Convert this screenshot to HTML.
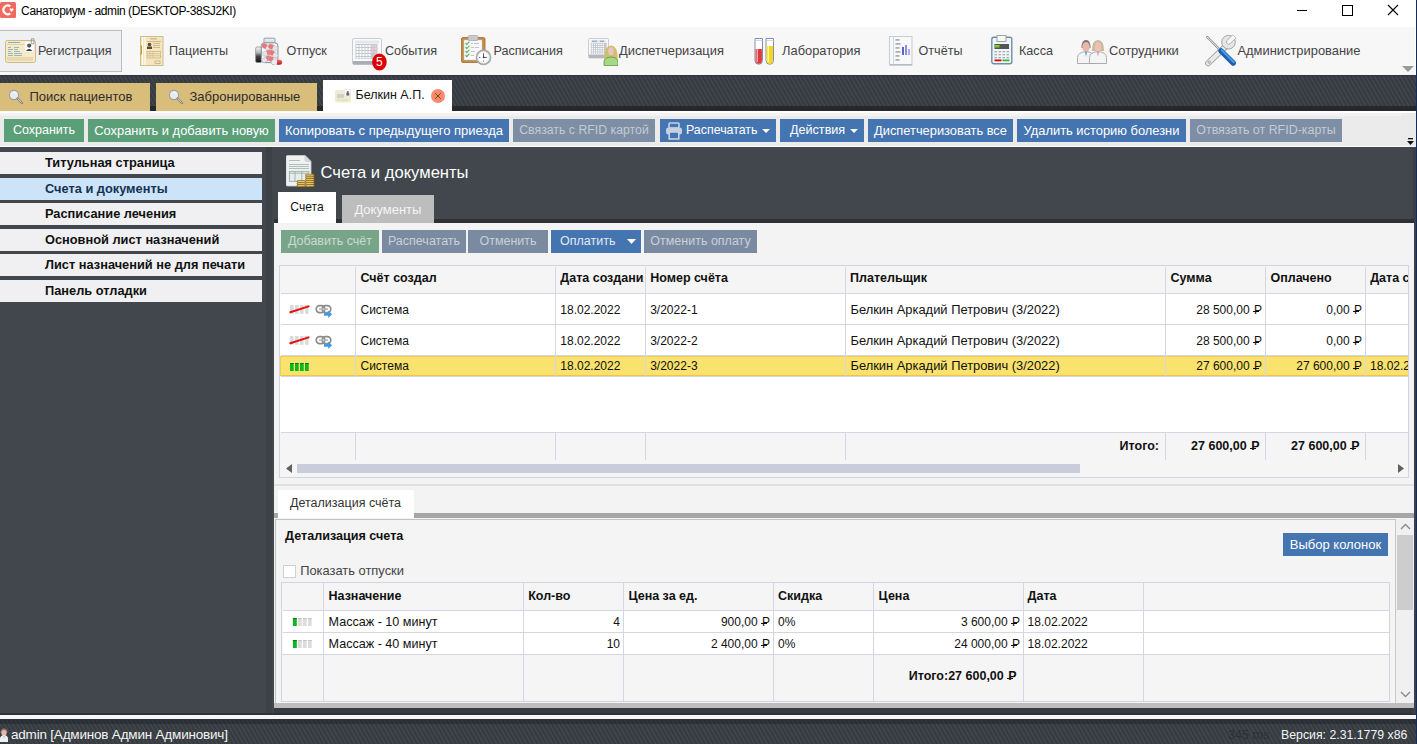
<!DOCTYPE html>
<html><head><meta charset="utf-8">
<style>
*{box-sizing:border-box;margin:0;padding:0}
html,body{width:1417px;height:744px;overflow:hidden;background:#fff;font-family:"Liberation Sans",sans-serif;position:relative}
.a{position:absolute}
.t{position:absolute;white-space:nowrap;line-height:1}
.r{position:relative;display:inline-block;margin-left:1px}
.r::after{content:"";position:absolute;left:-0.1em;width:0.5em;top:0.6em;height:0.08em;background:currentColor}
.stripes{background-color:#3a4045;background-image:repeating-linear-gradient(60deg,#353b3f 0px,#363c40 1.3px,#43494f 2.5px,#3c4247 3.1px,#353b3f 3.72px)}
.btn{position:absolute;height:23px;top:119px;color:#fff;font-size:12.5px;line-height:23px;text-align:center;white-space:nowrap}
.g{background:#5b9f78}
.b{background:#4575b0}
.d{background:#7d8ea5;color:#c3cbd5}
.nav{position:absolute;left:0;width:262px;height:22px;background:#f0f0f2;font-weight:bold;font-size:12.8px;line-height:22px;padding-left:45px;color:#111}
.gl{position:absolute;background:#d5d5e3}
.cell{position:absolute;font-size:12px;line-height:1;white-space:nowrap;color:#111}
.hd{font-weight:bold;font-size:12.5px}
</style></head><body>

<!-- Title bar -->
<div class="a" style="left:0;top:0;width:1417px;height:27px;background:#fff"></div>
<div class="a" style="left:0;top:2px;width:16px;height:16px;background:#f06a60;border-radius:1.5px"></div>
<svg class="a" style="left:0;top:0" width="17" height="20"><path d="M10.3 6.3 A4.3 4.3 0 1 0 10.3 13.3" stroke="#fff" stroke-width="2.2" fill="none"/><path d="M11.6 11.9 L9.7 9.8 A1 1 0 0 1 11.6 8.9 A1 1 0 0 1 13.4 9.8z" fill="#fff"/></svg>
<div class="t" style="left:21px;top:4.9px;font-size:12px;letter-spacing:-0.4px;color:#000">Санаториум - admin (DESKTOP-38SJ2KI)</div>
<div class="a" style="left:1297px;top:10px;width:10px;height:1px;background:#000"></div>
<div class="a" style="left:1342px;top:5px;width:11px;height:11px;border:1px solid #000"></div>
<svg class="a" style="left:1387px;top:4px" width="12" height="12"><path d="M1 1 L11 11 M11 1 L1 11" stroke="#000" stroke-width="1.1"/></svg>

<!-- Ribbon -->
<div class="a" style="left:0;top:27px;width:1415px;height:48px;background:#f7f7f7"></div>
<div class="a" style="left:0;top:30px;width:122px;height:42px;background:#eff0f2;border:1px solid #bcbcbc;border-left:none"></div>
<!-- ribbon icons -->
<svg class="a" style="left:5px;top:38px" width="32" height="26" viewBox="0 0 32 26">
<rect x="0.5" y="2.5" width="30" height="22" rx="2" fill="#f7eac6" stroke="#cdb98c"/>
<rect x="3" y="4.2" width="12" height="0.8" fill="#6aa2b8"/>
<rect x="2" y="6.2" width="20" height="0.8" fill="#dccb9f"/>
<g fill="#6aa2b8" opacity="0.85"><rect x="3" y="9" width="3" height="0.8"/><rect x="9" y="9" width="5" height="0.8"/>
<rect x="3" y="11" width="5" height="0.8"/><rect x="9" y="11" width="4" height="0.8"/>
<rect x="3" y="13" width="3" height="0.8"/><rect x="9" y="13" width="6" height="0.8"/>
<rect x="3" y="15" width="5" height="0.8"/><rect x="9" y="15" width="8" height="0.8"/>
<rect x="3" y="17" width="5" height="0.8"/><rect x="9" y="17" width="8" height="0.8"/></g>
<rect x="2" y="19.5" width="26" height="0.8" fill="#d2be8e"/><rect x="2" y="21.5" width="26" height="0.8" fill="#d2be8e"/>
<rect x="19.5" y="3.5" width="9.5" height="10.5" fill="#fff" stroke="#e3e3e3" stroke-width="0.6"/>
<circle cx="24.2" cy="7.6" r="2.1" fill="#5a5a5a"/><path d="M20.8 13 q3.4-4.2 6.8 0z" fill="#3f3f3f"/>
<path d="M26.3 0.8 h2.6 v5 h-2.6z" fill="none" stroke="#8a8a8a" stroke-width="0.8"/>
</svg>
<svg class="a" style="left:140px;top:36px" width="24" height="31" viewBox="0 0 24 31">
<rect x="0.5" y="0.5" width="22.5" height="29" fill="#f5e6bd" stroke="#cdbb92"/>
<rect x="2" y="1" width="1" height="28" fill="#fff"/><rect x="4.5" y="1" width="1" height="28" fill="#fff"/>
<path d="M0 10 h1.5 v8 h-1.5" fill="none" stroke="#c39a2a" stroke-width="1"/>
<rect x="10" y="2.5" width="7" height="0.8" fill="#8a7a5a" opacity="0.7"/>
<rect x="7" y="5" width="14" height="1" fill="#cdb98c"/>
<circle cx="9.5" cy="8.5" r="1.8" fill="#5a4a36"/><rect x="7" y="10.5" width="5" height="2.5" fill="#5a4a36"/>
<rect x="13" y="7" width="7" height="1" fill="#cdb98c"/><rect x="13" y="9" width="7" height="1" fill="#cdb98c"/><rect x="13" y="11" width="7" height="1" fill="#cdb98c"/>
<rect x="7" y="15.5" width="13.5" height="6.5" fill="none" stroke="#cdb98c" stroke-width="0.8"/><path d="M7 17.7 h13.5 M7 19.8 h13.5 M10 15.5 v6.5 M13 15.5 v6.5" stroke="#cdb98c" stroke-width="0.7"/>
<rect x="15" y="25" width="5" height="2.5" fill="none" stroke="#cdb98c"/>
</svg>
<svg class="a" style="left:255px;top:37px" width="28" height="29" viewBox="0 0 28 29">
<defs><linearGradient id="capg" x1="0" y1="0" x2="0" y2="1"><stop offset="0" stop-color="#f4f4f4"/><stop offset="0.35" stop-color="#b8b8b8"/><stop offset="0.6" stop-color="#444"/><stop offset="1" stop-color="#111"/></linearGradient>
<linearGradient id="pillr" x1="0" y1="0" x2="0" y2="1"><stop offset="0" stop-color="#f26a6a"/><stop offset="1" stop-color="#c41010"/></linearGradient></defs>
<rect x="0.6" y="10" width="6" height="15.5" rx="1.5" fill="url(#capg)" stroke="#8c8c8c" stroke-width="0.7"/>
<rect x="9" y="1.2" width="11" height="4.8" rx="0.8" fill="#eef0f2" stroke="#8a93a3" stroke-width="0.9"/>
<path d="M10 3.2 h9 M10 4.6 h9" stroke="#c9ced6" stroke-width="0.5"/>
<rect x="6.3" y="5.8" width="16.6" height="19.8" rx="3" fill="#f4f6f8" stroke="#838c9c" stroke-width="1"/>
<g transform="translate(11.5 10) rotate(28)"><rect x="-5" y="-2.3" width="10" height="4.6" rx="2.3" fill="#e3e7ea" stroke="#b5bcc2" stroke-width="0.5"/><path d="M0 -2.3 h-2.7 a2.3 2.3 0 0 0 0 4.6 h2.7z" fill="#e87878"/></g>
<g transform="translate(18 10.5) rotate(25)"><rect x="-5" y="-2.3" width="10" height="4.6" rx="2.3" fill="#e3e7ea" stroke="#b5bcc2" stroke-width="0.5"/><path d="M0 -2.3 h-2.7 a2.3 2.3 0 0 0 0 4.6 h2.7z" fill="#e87878"/></g>
<g transform="translate(12 16) rotate(-20)"><rect x="-5" y="-2.3" width="10" height="4.6" rx="2.3" fill="#e3e7ea" stroke="#b5bcc2" stroke-width="0.5"/><path d="M0 -2.3 h2.7 a2.3 2.3 0 0 1 0 4.6 h-2.7z" fill="#e87878"/></g>
<g transform="translate(18.5 17) rotate(35)"><rect x="-5" y="-2.3" width="10" height="4.6" rx="2.3" fill="#e3e7ea" stroke="#b5bcc2" stroke-width="0.5"/><path d="M0 -2.3 h-2.7 a2.3 2.3 0 0 0 0 4.6 h2.7z" fill="#e87878"/></g>
<g transform="translate(11.5 22) rotate(-25)"><rect x="-5" y="-2.3" width="10" height="4.6" rx="2.3" fill="#e3e7ea" stroke="#b5bcc2" stroke-width="0.5"/><path d="M0 -2.3 h2.7 a2.3 2.3 0 0 1 0 4.6 h-2.7z" fill="#e87878"/></g>
<g transform="translate(18 22.5) rotate(15)"><rect x="-5" y="-2.3" width="10" height="4.6" rx="2.3" fill="#e3e7ea" stroke="#b5bcc2" stroke-width="0.5"/><path d="M0 -2.3 h-2.7 a2.3 2.3 0 0 0 0 4.6 h2.7z" fill="#e87878"/></g>
<rect x="16.3" y="22.8" width="10.8" height="5" rx="2.5" fill="url(#pillr)"/><rect x="16.3" y="22.8" width="5.6" height="5" rx="2.5" fill="#e9eef1" stroke="#b9c2c8" stroke-width="0.4"/><rect x="19.4" y="22.8" width="2.5" height="5" fill="#e9eef1"/>
</svg>
<svg class="a" style="left:352px;top:38px" width="38" height="33" viewBox="0 0 38 33">
<rect x="0.5" y="0.5" width="29" height="26" rx="1.5" fill="#fafbfc" stroke="#c9cdd1"/>
<rect x="1" y="23" width="28.5" height="3.5" fill="#a8afb6"/>
<rect x="3" y="2.5" width="24" height="3" fill="#e4e8ec"/>
<rect x="3.5" y="6" width="22" height="15" fill="#c3c8ce"/>
<g fill="#fff">
<rect x="4.5" y="7" width="2" height="2"/><rect x="7.5" y="7" width="2" height="2"/><rect x="10.5" y="7" width="2" height="2"/><rect x="13.5" y="7" width="2" height="2"/><rect x="16.5" y="7" width="2" height="2"/>
<rect x="4.5" y="10" width="2" height="2"/><rect x="7.5" y="10" width="2" height="2"/><rect x="10.5" y="10" width="2" height="2"/><rect x="13.5" y="10" width="2" height="2"/><rect x="16.5" y="10" width="2" height="2"/>
<rect x="4.5" y="13" width="2" height="2"/><rect x="7.5" y="13" width="2" height="2"/><rect x="10.5" y="13" width="2" height="2"/><rect x="13.5" y="13" width="2" height="2"/><rect x="16.5" y="13" width="2" height="2"/>
<rect x="4.5" y="16" width="2" height="2"/><rect x="7.5" y="16" width="2" height="2"/><rect x="10.5" y="16" width="2" height="2"/><rect x="13.5" y="16" width="2" height="2"/><rect x="16.5" y="16" width="2" height="2"/>
<rect x="4.5" y="19" width="2" height="1.5"/><rect x="7.5" y="19" width="2" height="1.5"/><rect x="10.5" y="19" width="2" height="1.5"/><rect x="13.5" y="19" width="2" height="1.5"/><rect x="16.5" y="19" width="2" height="1.5"/>
</g>
<g fill="#f7c9cf"><rect x="19.5" y="7" width="2" height="2"/><rect x="22.5" y="7" width="2" height="2"/><rect x="19.5" y="10" width="2" height="2"/><rect x="22.5" y="10" width="2" height="2"/><rect x="19.5" y="13" width="2" height="2"/><rect x="22.5" y="13" width="2" height="2"/></g>
<ellipse cx="27.4" cy="24" rx="7.3" ry="8.6" fill="#dd0000"/>
<text x="27.4" y="28.3" font-family="Liberation Sans" font-size="12" fill="#fff" text-anchor="middle">5</text>
</svg>
<svg class="a" style="left:461px;top:35px" width="32" height="32" viewBox="0 0 32 32">
<rect x="0.5" y="2.5" width="23.5" height="25" rx="1.5" fill="#c68a45" stroke="#a56d2f" stroke-width="0.8"/>
<rect x="3" y="5" width="18" height="20" fill="#fff" stroke="#bcc6cf" stroke-width="0.6"/>
<rect x="7" y="0.5" width="10" height="5" rx="1.5" fill="#c8cacc" stroke="#9a9c9e" stroke-width="0.6"/>
<path d="M4.5 8 l1.3 1.6 l2.6-3 M4.5 12 l1.3 1.6 l2.6-3 M4.5 16 l1.3 1.6 l2.6-3 M4.5 20 l1.3 1.6 l2.6-3" stroke="#2f9a1e" stroke-width="1.2" fill="none"/>
<g fill="#9a9a9a"><rect x="10" y="8" width="2" height="0.8"/><rect x="13" y="8" width="5" height="0.8"/><rect x="10" y="12" width="3" height="0.8"/><rect x="14" y="12" width="4" height="0.8"/><rect x="10" y="16" width="4" height="0.8"/><rect x="10" y="20" width="3" height="0.8"/></g><rect x="4" y="6.5" width="16" height="15" fill="#e6ebef" opacity="0.35"/>
<circle cx="22.5" cy="22.4" r="7" fill="#fff" stroke="#a8abae" stroke-width="1.8"/><circle cx="22.5" cy="22.4" r="5.6" fill="none" stroke="#d8dadc" stroke-width="0.6"/>
<path d="M22.5 18.2 v4.2 h3.6" stroke="#333" stroke-width="0.8" fill="none"/><circle cx="22.5" cy="22.4" r="0.8" fill="#333"/><circle cx="18.8" cy="22.4" r="0.55" fill="#333"/><circle cx="22.5" cy="26" r="0.55" fill="#333"/>
</svg>
<svg class="a" style="left:588px;top:38px" width="30" height="28" viewBox="0 0 30 28">
<rect x="0.5" y="0.5" width="20" height="19.5" rx="1.2" fill="#f8f9fa" stroke="#c9cdd1"/>
<rect x="1" y="16.5" width="19.5" height="3.5" fill="#b3b9bf"/>
<rect x="3" y="2" width="15" height="2.2" fill="#e3e7eb"/><rect x="4" y="2.8" width="5" height="0.7" fill="#6a7a88"/><rect x="12" y="2.8" width="4" height="0.7" fill="#6a7a88"/>
<rect x="2.8" y="4.8" width="15.8" height="11.2" fill="#bfc5cc"/>
<rect x="3.6" y="5.6" width="1.4" height="1.4" fill="#fff"/><rect x="5.8" y="5.6" width="1.4" height="1.4" fill="#fff"/><rect x="8.0" y="5.6" width="1.4" height="1.4" fill="#fff"/><rect x="10.2" y="5.6" width="1.4" height="1.4" fill="#fff"/><rect x="12.4" y="5.6" width="1.4" height="1.4" fill="#fff"/><rect x="14.6" y="5.6" width="1.4" height="1.4" fill="#fff"/><rect x="16.8" y="5.6" width="1.4" height="1.4" fill="#f3b8c0"/><rect x="3.6" y="7.8" width="1.4" height="1.4" fill="#fff"/><rect x="5.8" y="7.8" width="1.4" height="1.4" fill="#fff"/><rect x="8.0" y="7.8" width="1.4" height="1.4" fill="#fff"/><rect x="10.2" y="7.8" width="1.4" height="1.4" fill="#fff"/><rect x="12.4" y="7.8" width="1.4" height="1.4" fill="#fff"/><rect x="14.6" y="7.8" width="1.4" height="1.4" fill="#fff"/><rect x="16.8" y="7.8" width="1.4" height="1.4" fill="#f3b8c0"/><rect x="3.6" y="10.0" width="1.4" height="1.4" fill="#fff"/><rect x="5.8" y="10.0" width="1.4" height="1.4" fill="#fff"/><rect x="8.0" y="10.0" width="1.4" height="1.4" fill="#fff"/><rect x="10.2" y="10.0" width="1.4" height="1.4" fill="#fff"/><rect x="12.4" y="10.0" width="1.4" height="1.4" fill="#fff"/><rect x="14.6" y="10.0" width="1.4" height="1.4" fill="#fff"/><rect x="16.8" y="10.0" width="1.4" height="1.4" fill="#f3b8c0"/><rect x="3.6" y="12.2" width="1.4" height="1.4" fill="#fff"/><rect x="5.8" y="12.2" width="1.4" height="1.4" fill="#fff"/><rect x="8.0" y="12.2" width="1.4" height="1.4" fill="#fff"/><rect x="10.2" y="12.2" width="1.4" height="1.4" fill="#fff"/><rect x="12.4" y="12.2" width="1.4" height="1.4" fill="#fff"/><rect x="14.6" y="12.2" width="1.4" height="1.4" fill="#fff"/><rect x="16.8" y="12.2" width="1.4" height="1.4" fill="#f3b8c0"/><rect x="3.6" y="14.4" width="1.4" height="1.4" fill="#fff"/><rect x="5.8" y="14.4" width="1.4" height="1.4" fill="#fff"/><rect x="8.0" y="14.4" width="1.4" height="1.4" fill="#fff"/><rect x="10.2" y="14.4" width="1.4" height="1.4" fill="#fff"/><rect x="12.4" y="14.4" width="1.4" height="1.4" fill="#fff"/><rect x="14.6" y="14.4" width="1.4" height="1.4" fill="#fff"/><rect x="16.8" y="14.4" width="1.4" height="1.4" fill="#f3b8c0"/>
<path d="M16.5 23 q-1-15 6.5-15.5 q7.5 0.5 6.5 15.5z" fill="#cdbf70"/>
<ellipse cx="23" cy="13.2" rx="2.8" ry="4" fill="#ebc5bd"/>
<path d="M16 27.5 v-3.5 q0-4.5 7-5 q7 0.5 7 5 v3.5z" fill="#a6d985" stroke="#5f9a3e" stroke-width="0.8"/>
</svg>
<svg class="a" style="left:754px;top:38px" width="21" height="27" viewBox="0 0 21 27">
<path d="M1 0.5 h7.5 v22 a3.75 3.75 0 0 1 -7.5 0z" fill="#fff" stroke="#858aa8" stroke-width="1"/>
<path d="M1.6 11 h6.3 v11.5 a3.15 3.15 0 0 1 -6.3 0z" fill="#df3a3a"/><rect x="2.5" y="11" width="1.5" height="13" fill="#f4a5a5"/>
<path d="M12 0.5 h7.5 v22 a3.75 3.75 0 0 1 -7.5 0z" fill="#fff" stroke="#858aa8" stroke-width="1"/>
<path d="M12.6 8 h6.3 v14.5 a3.15 3.15 0 0 1 -6.3 0z" fill="#f7d51e"/><rect x="13.5" y="8" width="1.5" height="16" fill="#fdfb8c"/>
<rect x="1" y="2.2" width="7.5" height="0.8" fill="#ccd"/><rect x="12" y="2.2" width="7.5" height="0.8" fill="#ccd"/>
</svg>
<svg class="a" style="left:889px;top:36px" width="24" height="30" viewBox="0 0 24 30">
<rect x="0.5" y="0.5" width="22.5" height="28.5" fill="#f6f8fa" stroke="#c8cbd0"/>
<rect x="1" y="28" width="22" height="1.5" fill="#b8bcc2"/>
<rect x="4" y="1" width="0.8" height="27.5" fill="#c5cdd5"/>
<g fill="#666"><rect x="6.5" y="3.5" width="4" height="0.9"/><rect x="6.5" y="7.5" width="5" height="0.9"/><rect x="6.5" y="11.5" width="4" height="0.9"/><rect x="6.5" y="15.5" width="5" height="0.9"/><rect x="6.5" y="19.5" width="4" height="0.9"/><rect x="6.5" y="23.5" width="4" height="0.9"/></g>
<rect x="13" y="11" width="2" height="8" fill="#5b64c0"/><rect x="16" y="9" width="2" height="10" fill="#8990e0"/><rect x="19" y="13" width="2" height="6" fill="#a9b0ea"/>
</svg>
<svg class="a" style="left:991px;top:35px" width="22" height="30" viewBox="0 0 22 30">
<rect x="0.8" y="2.3" width="20" height="26.5" rx="2" fill="#eef6fb" stroke="#6f8ea6" stroke-width="1.4"/>
<rect x="6" y="0.5" width="9" height="6" fill="#f4faf0" stroke="#999" stroke-width="0.9"/>
<rect x="3.5" y="9" width="14.5" height="5" fill="#555"/><rect x="4" y="10" width="4.5" height="2.5" fill="#7ad21c"/>
<g fill="#a9a9a9"><rect x="3.5" y="16" width="2.5" height="1.3"/><rect x="7.5" y="16" width="2.5" height="1.3"/><rect x="11.5" y="16" width="2.5" height="1.3"/><rect x="15.5" y="16" width="2.5" height="1.3"/><rect x="3.5" y="19" width="2.5" height="1.3"/><rect x="7.5" y="19" width="2.5" height="1.3"/><rect x="11.5" y="19" width="2.5" height="1.3"/><rect x="15.5" y="19" width="2.5" height="1.3"/><rect x="3.5" y="22" width="2.5" height="1.3"/><rect x="7.5" y="22" width="2.5" height="1.3"/><rect x="11.5" y="22" width="2.5" height="1.3"/><rect x="15.5" y="22" width="2.5" height="1.3"/></g>
<rect x="3.5" y="24.5" width="7" height="1.8" fill="#d00"/><rect x="11.5" y="24.5" width="7" height="1.8" fill="#4caf2a"/>
</svg>
<svg class="a" style="left:1077px;top:39px" width="30" height="26" viewBox="0 0 30 26">
<path d="M4.5 9 q0-8 4.5-8 q4.5 0 4.5 8z" fill="#7c6f76"/>
<ellipse cx="9" cy="8" rx="3.8" ry="5" fill="#e8b8a8"/>
<path d="M15 12 q0-11 6-11 q6 0 6 11z" fill="#c7b99c"/>
<ellipse cx="21" cy="8" rx="3.5" ry="5" fill="#eebfb6"/>
<path d="M0.5 24.5 v-6 q0-5 8.5-6 q8.5 1 8.5 6 v6z" fill="#f4f4f4" stroke="#9a9a9a" stroke-width="0.8"/>
<path d="M8 13 l1 5 l1-5z" fill="#5b9cd0"/>
<path d="M12.5 24.5 v-6 q0-5 8.5-6 q8.5 1 8.5 6 v6z" fill="#f4f4f4" stroke="#9a9a9a" stroke-width="0.8"/>
<path d="M20 13 l1 5 l1-5z" fill="#e08fa0"/>
</svg>
<svg class="a" style="left:1204px;top:34px" width="33" height="33" viewBox="0 0 33 33">
<defs><linearGradient id="bh" x1="0" y1="0" x2="1" y2="0"><stop offset="0" stop-color="#6bb3f0"/><stop offset="0.5" stop-color="#2a7fd6"/><stop offset="1" stop-color="#1254a8"/></linearGradient></defs>
<path d="M3.2 3 L17 16.8" stroke="#8d8d8d" stroke-width="2.4" stroke-linecap="round"/>
<path d="M3.2 3 L17 16.8" stroke="#f4f4f4" stroke-width="1" stroke-linecap="round"/>
<path d="M21.5 12.5 L4.2 29.2" stroke="#9c9c9c" stroke-width="6" stroke-linecap="round"/>
<path d="M21.5 12.5 L4.2 29.2" stroke="#e9e9e9" stroke-width="4.4" stroke-linecap="round"/>
<circle cx="24.5" cy="8.2" r="6.8" fill="#e6e6e6" stroke="#9c9c9c" stroke-width="0.9"/>
<path d="M23.1 6.4 L28.8 0.7 L32 3.9 L26.3 9.6 A2.25 2.25 0 0 1 23.1 6.4z" fill="#f7f7f7" stroke="#a0a0a0" stroke-width="0.8"/>
<path d="M28.5 0 L33 4.5 L33 0z" fill="#f7f7f7"/>
<circle cx="5.2" cy="28.2" r="1.2" fill="none" stroke="#8a8a8a" stroke-width="0.7"/>
<path d="M17 16.8 L29.2 29" stroke="#1a5fb0" stroke-width="5.4" stroke-linecap="round"/>
<path d="M17.8 16.2 L29.8 28.2" stroke="#4a9be6" stroke-width="2" stroke-linecap="round"/>
</svg>
<!-- ribbon text -->
<div class="t" style="left:38px;top:44.5px;font-size:12.6px;color:#444">Регистрация</div>
<div class="t" style="left:169px;top:44.5px;font-size:12.6px;color:#444">Пациенты</div>
<div class="t" style="left:286.5px;top:44.5px;font-size:12.6px;color:#444">Отпуск</div>
<div class="t" style="left:385px;top:44.5px;font-size:12.6px;color:#444">События</div>
<div class="t" style="left:493.5px;top:44.5px;font-size:12.6px;color:#444">Расписания</div>
<div class="t" style="left:619px;top:44.5px;font-size:12.9px;color:#444">Диспетчеризация</div>
<div class="t" style="left:782px;top:44.5px;font-size:12.9px;color:#444">Лаборатория</div>
<div class="t" style="left:918.5px;top:44.5px;font-size:12.6px;color:#444">Отчёты</div>
<div class="t" style="left:1019px;top:44.5px;font-size:12.6px;color:#444">Касса</div>
<div class="t" style="left:1109px;top:44.5px;font-size:12.9px;color:#444">Сотрудники</div>
<div class="t" style="left:1237.5px;top:44.5px;font-size:12.9px;color:#444">Администрирование</div>
<svg class="a" style="left:1402px;top:66px" width="12" height="6"><path d="M0 0 h12 l-6 6z" fill="#9a9a9a"/></svg>


<!-- Dark tab band -->
<div class="a stripes" style="left:0;top:75px;width:1416px;height:36px"></div>
<div class="a" style="left:0;top:75px;width:1416px;height:1px;background:#30343a"></div>
<div class="a" style="left:0;top:106px;width:1416px;height:5px;background:#26292c"></div>
<div class="a" style="left:0;top:83px;width:150px;height:28px;background:#d8bd7b"></div>
<div class="a" style="left:156px;top:83px;width:161px;height:28px;background:#d8bd7b"></div>
<div class="a" style="left:323px;top:80px;width:129px;height:31px;background:#fff"></div>
<svg class="a" style="left:8px;top:89px" width="16" height="15" viewBox="0 0 16 15"><circle cx="6" cy="6" r="4.6" fill="#e6ecef" stroke="#9aa0a4" stroke-width="1.1"/><path d="M5 3.5 a3 3 0 0 1 3 1" stroke="#fff" stroke-width="1" fill="none"/><path d="M9.5 9.5 L14 14" stroke="#888" stroke-width="2.2" stroke-linecap="round"/><path d="M9.8 9.8 L13.6 13.6" stroke="#ddd" stroke-width="0.8"/></svg>
<div class="t" style="left:29.5px;top:89.6px;font-size:13px;color:#2e2e2e">Поиск пациентов</div>
<svg class="a" style="left:168px;top:89px" width="16" height="15" viewBox="0 0 16 15"><circle cx="6" cy="6" r="4.6" fill="#e6ecef" stroke="#9aa0a4" stroke-width="1.1"/><path d="M5 3.5 a3 3 0 0 1 3 1" stroke="#fff" stroke-width="1" fill="none"/><path d="M9.5 9.5 L14 14" stroke="#888" stroke-width="2.2" stroke-linecap="round"/><path d="M9.8 9.8 L13.6 13.6" stroke="#ddd" stroke-width="0.8"/></svg>
<div class="t" style="left:189.5px;top:89.6px;font-size:13px;color:#2e2e2e">Забронированные</div>
<svg class="a" style="left:335px;top:89px" width="16" height="14" viewBox="0 0 16 14"><rect x="0" y="1" width="16" height="12.5" rx="1.5" fill="#f3ead2"/><rect x="2" y="5" width="7" height="4" fill="#c8d4c8"/><rect x="2" y="10.5" width="11" height="1" fill="#e0d4b4"/><rect x="10" y="0.5" width="5.5" height="7" fill="#fff" stroke="#ddd" stroke-width="0.5"/><circle cx="12.8" cy="3" r="1.1" fill="#666"/><rect x="11.3" y="3.8" width="3" height="2.8" fill="#666"/></svg>
<div class="t" style="left:355.5px;top:89.2px;font-size:12.5px;color:#111">Белкин А.П.</div>
<svg class="a" style="left:431px;top:89px" width="14" height="14" viewBox="0 0 14 14"><circle cx="7" cy="7" r="7" fill="#f98a6e"/><path d="M4.2 4.2 L9.8 9.8 M9.8 4.2 L4.2 9.8" stroke="#7a4436" stroke-width="1"/></svg>


<!-- Toolbar -->
<div class="a" style="left:0;top:111px;width:1416px;height:36px;background:#ebebeb"></div>
<div class="a" style="left:0;top:111px;width:1416px;height:1.5px;background:#fff"></div>
<div class="a" style="left:0;top:112.5px;width:1401px;height:3.5px;background:#f3f3f3"></div>
<div class="a" style="left:0;top:145.5px;width:1416px;height:1.5px;background:#fbfbfb"></div>
<div class="a" style="left:1401px;top:115px;width:15px;height:30px;background:#eaeaea"></div>
<svg class="a" style="left:1407px;top:137px" width="7" height="9"><rect x="1" y="1" width="5" height="1.3" fill="#111"/><path d="M0 4 h7 l-3.5 4z" fill="#111"/></svg>
<div class="btn g" style="left:4px;width:80px">Сохранить</div>
<div class="btn g" style="left:88px;width:187px;font-size:12.9px">Сохранить и добавить новую</div>
<div class="btn b" style="left:279px;width:230px;font-size:13px">Копировать с предыдущего приезда</div>
<div class="btn d" style="left:513px;width:142px;font-size:12.3px">Связать с RFID картой</div>
<div class="btn b" style="left:660px;width:116px;text-align:left;padding-left:26px;font-size:12.4px">Распечатать</div>
<svg class="a" style="left:665px;top:122px" width="18" height="18" viewBox="0 0 18 18"><rect x="4" y="1" width="10" height="5" rx="1" fill="none" stroke="#c5d1e2" stroke-width="1.6"/><rect x="1" y="5.5" width="16" height="7" rx="2.5" fill="#c5d1e2"/><rect x="4.2" y="10" width="9.6" height="7" fill="#4575b0" stroke="#c5d1e2" stroke-width="1.6"/></svg>
<svg class="a" style="left:762px;top:129px" width="8" height="4"><path d="M0 0 h8 l-4 4z" fill="#fff"/></svg>
<div class="btn b" style="left:780px;width:84px;text-align:left;padding-left:10px;font-size:12.6px">Действия</div>
<svg class="a" style="left:850px;top:129px" width="8" height="4"><path d="M0 0 h8 l-4 4z" fill="#fff"/></svg>
<div class="btn b" style="left:868px;width:145px;font-size:12.85px">Диспетчеризовать все</div>
<div class="btn b" style="left:1017px;width:169px;font-size:12.9px">Удалить историю болезни</div>
<div class="btn d" style="left:1190px;width:152px;font-size:12.45px">Отвязать от RFID-карты</div>

<!-- Main dark -->
<div class="a" style="left:0;top:147px;width:1416px;height:568px;background:#41474d"></div>
<div class="a" style="left:274px;top:707px;width:1140px;height:6px;background:#373c41"></div>
<div class="a" style="left:0;top:713px;width:1416px;height:2px;background:#2f3337"></div>
<div class="a" style="left:266px;top:147px;width:6px;height:566px;background:#3c4146"></div>
<div class="nav" style="top:152px">Титульная страница</div>
<div class="nav" style="top:178px;background:#cde3f7;color:#143354">Счета и документы</div>
<div class="nav" style="top:203px">Расписание лечения</div>
<div class="nav" style="top:229px">Основной лист назначений</div>
<div class="nav" style="top:254px">Лист назначений не для печати</div>
<div class="nav" style="top:280px">Панель отладки</div>

<!-- content header -->
<div class="a" style="left:1413px;top:147px;width:3px;height:567px;background:#3a4046"></div>
<svg class="a" style="left:286px;top:155px" width="30" height="33" viewBox="0 0 30 33">
<path d="M1.5 0.5 h17.5 l6 6 v23 a1.5 1.5 0 0 1 -1.5 1.5 h-22 a1.5 1.5 0 0 1 -1.5 -1.5 v-27.5 a1.5 1.5 0 0 1 1.5 -1.5z" fill="#eef3f2" stroke="#c5cfcc" stroke-width="0.8"/>
<path d="M19 0.5 v4.5 a1.5 1.5 0 0 0 1.5 1.5 h4.5z" fill="#d5dedc" stroke="#b9c5c2" stroke-width="0.6"/>
<g fill="#a3aeab"><rect x="3" y="5" width="11" height="0.8"/><rect x="3" y="9" width="20" height="0.8"/><rect x="3" y="11" width="20" height="0.8"/><rect x="3" y="13" width="20" height="0.8"/></g>
<rect x="3.3" y="16.3" width="19.5" height="10" fill="#e6eeec" stroke="#98a4a1" stroke-width="0.8"/>
<path d="M3.3 18.2 h19.5 M9 16.3 v10 M15.8 16.3 v10" stroke="#98a4a1" stroke-width="0.8"/>
<rect x="19.5" y="19.2" width="8.8" height="2.1" rx="1" fill="#c9992f" stroke="#7a5a14" stroke-width="0.5"/><rect x="20.5" y="19.8" width="6.8" height="0.6" fill="#f6e3a0"/><rect x="19.5" y="21.3" width="8.8" height="2.1" rx="1" fill="#c9992f" stroke="#7a5a14" stroke-width="0.5"/><rect x="20.5" y="21.9" width="6.8" height="0.6" fill="#f6e3a0"/><rect x="19.5" y="23.4" width="8.8" height="2.1" rx="1" fill="#c9992f" stroke="#7a5a14" stroke-width="0.5"/><rect x="20.5" y="24.0" width="6.8" height="0.6" fill="#f6e3a0"/><rect x="19.5" y="25.5" width="8.8" height="2.1" rx="1" fill="#c9992f" stroke="#7a5a14" stroke-width="0.5"/><rect x="20.5" y="26.1" width="6.8" height="0.6" fill="#f6e3a0"/><rect x="19.5" y="27.6" width="8.8" height="2.1" rx="1" fill="#c9992f" stroke="#7a5a14" stroke-width="0.5"/><rect x="20.5" y="28.2" width="6.8" height="0.6" fill="#f6e3a0"/><rect x="19.5" y="29.7" width="8.8" height="2.1" rx="1" fill="#c9992f" stroke="#7a5a14" stroke-width="0.5"/><rect x="20.5" y="30.3" width="6.8" height="0.6" fill="#f6e3a0"/><rect x="11" y="25.5" width="8.5" height="2.1" rx="1" fill="#c9992f" stroke="#7a5a14" stroke-width="0.5"/><rect x="12" y="26.1" width="6.5" height="0.6" fill="#f6e3a0"/><rect x="11" y="27.6" width="8.5" height="2.1" rx="1" fill="#c9992f" stroke="#7a5a14" stroke-width="0.5"/><rect x="12" y="28.2" width="6.5" height="0.6" fill="#f6e3a0"/><rect x="11" y="29.7" width="8.5" height="2.1" rx="1" fill="#c9992f" stroke="#7a5a14" stroke-width="0.5"/><rect x="12" y="30.3" width="6.5" height="0.6" fill="#f6e3a0"/>
</svg>
<div class="t" style="left:320.5px;top:165.3px;font-size:16.6px;color:#fff">Счета и документы</div>
<div class="a" style="left:274px;top:218.5px;width:1140px;height:4.5px;background:#2d3134"></div>
<div class="a" style="left:278px;top:192px;width:58px;height:31px;background:#fff"></div>
<div class="t" style="left:290.3px;top:200.8px;font-size:12.1px;color:#111">Счета</div>
<div class="a" style="left:342px;top:195px;width:92px;height:28px;background:#bdbdbd"></div>
<div class="t" style="left:354.4px;top:202.5px;font-size:13px;color:#f4f4f4">Документы</div>

<!-- panel -->
<div class="a" style="left:274px;top:223px;width:1140px;height:484px;background:#f3f3f3"></div>
<div class="a" style="left:274px;top:483.5px;width:1140px;height:2px;background:#e0e0e0"></div>

<!-- panel buttons -->
<div class="btn" style="left:281px;top:230px;width:98px;background:#78a58a;color:#c8dccf;font-size:12.5px">Добавить счёт</div>
<div class="btn" style="left:382px;top:230px;width:84px;background:#7a8aa0;color:#c9d0da;font-size:12.5px">Распечатать</div>
<div class="btn" style="left:468px;top:230px;width:80px;background:#7a8aa0;color:#c9d0da;font-size:12.5px">Отменить</div>
<div class="btn" style="left:551px;top:230px;width:90px;background:#4575b0;color:#e3e9f0;font-size:12.5px;text-align:left;padding-left:9px">Оплатить</div>
<svg class="a" style="left:627px;top:239px" width="9" height="5"><path d="M0 0 h9 l-4.5 5z" fill="#fff"/></svg>
<div class="btn" style="left:644px;top:230px;width:113px;background:#7a8aa0;color:#c9d0da;font-size:12.5px">Отменить оплату</div>

<!-- grid 1 -->
<div class="a" style="left:279px;top:265px;width:1130px;height:213px;background:#fff;border:1px solid #d3d3e3"></div>
<div class="a" style="left:280px;top:266px;width:1128px;height:27px;background:#f5f5f5"></div>
<div class="a" style="left:280px;top:432px;width:1128px;height:45px;background:#f5f5f5"></div>
<div class="gl" style="left:280.5px;top:292.5px;width:1128px;height:1px"></div>
<div class="gl" style="left:280.5px;top:324px;width:1128px;height:1px"></div>
<div class="gl" style="left:280.5px;top:355px;width:1128px;height:1px"></div>
<div class="a" style="left:280px;top:356px;width:1128px;height:20px;background:#f9e26d;border:1px solid #f0cd58;border-bottom-color:#f6c53a;border-right:none"></div>
<div class="gl" style="left:280.5px;top:376px;width:1128px;height:1px"></div>
<div class="gl" style="left:280.5px;top:432px;width:1128px;height:1px"></div>
<div class="gl" style="left:355px;top:266.5px;width:1px;height:110px"></div>
<div class="gl" style="left:555px;top:266.5px;width:1px;height:110px"></div>
<div class="gl" style="left:645px;top:266.5px;width:1px;height:110px"></div>
<div class="gl" style="left:845px;top:266.5px;width:1px;height:110px"></div>
<div class="gl" style="left:1165px;top:266.5px;width:1px;height:110px"></div>
<div class="gl" style="left:1265px;top:266.5px;width:1px;height:110px"></div>
<div class="gl" style="left:1365px;top:266.5px;width:1px;height:110px"></div>
<div class="gl" style="left:355px;top:433px;width:1px;height:26.5px"></div>
<div class="gl" style="left:555px;top:433px;width:1px;height:26.5px"></div>
<div class="gl" style="left:645px;top:433px;width:1px;height:26.5px"></div>
<div class="gl" style="left:845px;top:433px;width:1px;height:26.5px"></div>
<div class="gl" style="left:1165px;top:433px;width:1px;height:26.5px"></div>
<div class="gl" style="left:1265px;top:433px;width:1px;height:26.5px"></div>
<div class="gl" style="left:1365px;top:433px;width:1px;height:26.5px"></div>

<div class="cell hd" style="left:360.5px;top:272.4px">Счёт создал</div>
<div class="a" style="left:560px;top:266px;width:84px;height:26px;overflow:hidden"><div class="cell hd" style="left:0.3px;top:6.4px">Дата создания</div></div>
<div class="cell hd" style="left:650.2px;top:272.4px">Номер счёта</div>
<div class="cell hd" style="left:850px;top:272.4px">Плательщик</div>
<div class="cell hd" style="left:1170.5px;top:272.4px">Сумма</div>
<div class="cell hd" style="left:1270.5px;top:272.4px">Оплачено</div>
<div class="a" style="left:1369px;top:266px;width:39px;height:26px;overflow:hidden"><div class="cell hd" style="left:1.2px;top:6.4px">Дата создания</div></div>

<!-- row icons -->
<svg class="a" style="left:289px;top:304px" width="21" height="11" viewBox="0 0 21 11"><g fill="#d9dbdc"><rect x="1" y="1" width="3.6" height="8.8"/><rect x="6" y="1" width="3.6" height="8.8"/><rect x="11" y="1" width="3.6" height="8.8"/><rect x="16" y="1" width="3.6" height="8.8"/></g><path d="M1.3 8.3 L19.6 2.4" stroke="#e81010" stroke-width="2" stroke-linecap="round"/></svg>
<svg class="a" style="left:315px;top:304px" width="18" height="15" viewBox="0 0 18 15"><rect x="1.2" y="1.6" width="8.6" height="7" rx="3.5" fill="none" stroke="#8c8c8c" stroke-width="1.7"/><rect x="7.2" y="1.6" width="8.6" height="7" rx="3.5" fill="none" stroke="#8c8c8c" stroke-width="1.7"/><rect x="4" y="4.3" width="9" height="1.6" fill="#b5b5b5"/><path d="M9 8.9 h4.2 v-2.4 l3.9 3.8 l-3.9 3.8 v-2.4 h-4.2z" fill="#3f9be6"/></svg>
<svg class="a" style="left:289px;top:335px" width="21" height="11" viewBox="0 0 21 11"><g fill="#d9dbdc"><rect x="1" y="1" width="3.6" height="8.8"/><rect x="6" y="1" width="3.6" height="8.8"/><rect x="11" y="1" width="3.6" height="8.8"/><rect x="16" y="1" width="3.6" height="8.8"/></g><path d="M1.3 8.3 L19.6 2.4" stroke="#e81010" stroke-width="2" stroke-linecap="round"/></svg>
<svg class="a" style="left:315px;top:335px" width="18" height="15" viewBox="0 0 18 15"><rect x="1.2" y="1.6" width="8.6" height="7" rx="3.5" fill="none" stroke="#8c8c8c" stroke-width="1.7"/><rect x="7.2" y="1.6" width="8.6" height="7" rx="3.5" fill="none" stroke="#8c8c8c" stroke-width="1.7"/><rect x="4" y="4.3" width="9" height="1.6" fill="#b5b5b5"/><path d="M9 8.9 h4.2 v-2.4 l3.9 3.8 l-3.9 3.8 v-2.4 h-4.2z" fill="#3f9be6"/></svg>
<svg class="a" style="left:289px;top:362px" width="21" height="10" viewBox="0 0 21 10"><g fill="#0cb81e"><rect x="1" y="1" width="3.7" height="8"/><rect x="6" y="1" width="3.7" height="8"/><rect x="11" y="1" width="3.7" height="8"/><rect x="16" y="1" width="3.7" height="8"/></g><g fill="#0a7a14"><rect x="1" y="1" width="3.7" height="1"/><rect x="6" y="1" width="3.7" height="1"/><rect x="11" y="1" width="3.7" height="1"/><rect x="16" y="1" width="3.7" height="1"/></g></svg>

<!-- rows -->
<div class="cell" style="left:360.5px;top:304.2px">Система</div>
<div class="cell" style="left:560.3px;top:304.2px">18.02.2022</div>
<div class="cell" style="left:650.2px;top:304.2px">3/2022-1</div>
<div class="cell" style="left:850.5px;top:303.5px;font-size:12.9px">Белкин Аркадий Петрович (3/2022)</div>
<div class="cell" style="left:1166px;width:96px;text-align:right;top:304.2px">28 500,00 <span class="r">Р</span></div>
<div class="cell" style="left:1266px;width:96px;text-align:right;top:304.2px">0,00 <span class="r">Р</span></div>

<div class="cell" style="left:360.5px;top:335.3px">Система</div>
<div class="cell" style="left:560.3px;top:335.3px">18.02.2022</div>
<div class="cell" style="left:650.2px;top:335.3px">3/2022-2</div>
<div class="cell" style="left:850.5px;top:334.6px;font-size:12.9px">Белкин Аркадий Петрович (3/2022)</div>
<div class="cell" style="left:1166px;width:96px;text-align:right;top:335.3px">28 500,00 <span class="r">Р</span></div>
<div class="cell" style="left:1266px;width:96px;text-align:right;top:335.3px">0,00 <span class="r">Р</span></div>

<div class="cell" style="left:360.5px;top:360.4px">Система</div>
<div class="cell" style="left:560.3px;top:360.4px">18.02.2022</div>
<div class="cell" style="left:650.2px;top:360.4px">3/2022-3</div>
<div class="cell" style="left:850.5px;top:359.7px;font-size:12.9px">Белкин Аркадий Петрович (3/2022)</div>
<div class="cell" style="left:1166px;width:96px;text-align:right;top:360.4px">27 600,00 <span class="r">Р</span></div>
<div class="cell" style="left:1266px;width:96px;text-align:right;top:360.4px">27 600,00 <span class="r">Р</span></div>
<div class="a" style="left:1366px;top:356px;width:42px;height:20px;overflow:hidden"><div class="cell" style="left:4px;top:4.4px">18.02.2022</div></div>

<!-- footer -->
<div class="cell hd" style="left:1060px;width:99px;text-align:right;top:440.4px">Итого:</div>
<div class="cell hd" style="left:1166px;width:93.5px;text-align:right;top:440.4px">27 600,00 <span class="r">Р</span></div>
<div class="cell hd" style="left:1266px;width:93.5px;text-align:right;top:440.4px">27 600,00 <span class="r">Р</span></div>

<!-- h scrollbar -->
<svg class="a" style="left:286px;top:464px" width="6" height="9"><path d="M6 0 v9 l-6-4.5z" fill="#606060"/></svg>
<div class="a" style="left:297px;top:464px;width:783px;height:9px;background:#c9ccda"></div>
<svg class="a" style="left:1398px;top:464px" width="6" height="9"><path d="M0 0 v9 l6-4.5z" fill="#606060"/></svg>

<!-- detail tab -->
<div class="a" style="left:278px;top:490px;width:136px;height:28px;background:#fff"></div>
<div class="t" style="left:290px;top:497px;font-size:12.5px;color:#333">Детализация счёта</div>
<div class="a" style="left:274px;top:513px;width:4px;height:5px;background:#a6a6a6"></div>
<div class="a" style="left:414px;top:513px;width:1000px;height:5px;background:#a6a6a6"></div>

<!-- inner panel -->
<div class="a" style="left:275px;top:519px;width:1121px;height:185px;background:#f4f4f4;border:1px solid #c3c3c3;border-bottom:none;border-right:1px solid #c8c8c8"></div>
<div class="a" style="left:1396px;top:519px;width:18px;height:184px;background:#f0f0f0"></div>
<div class="a" style="left:1397px;top:535px;width:16px;height:75px;background:#cdcdcd"></div>
<svg class="a" style="left:1400px;top:523px" width="11" height="7"><path d="M1 6 L5.5 1.5 L10 6" stroke="#888" stroke-width="1.3" fill="none"/></svg>
<svg class="a" style="left:1400px;top:691px" width="11" height="7"><path d="M1 1 L5.5 5.5 L10 1" stroke="#888" stroke-width="1.3" fill="none"/></svg>
<div class="a" style="left:274px;top:703px;width:1140px;height:4.5px;background:#bebebe"></div>

<div class="t" style="left:285px;top:529.8px;font-size:12.6px;font-weight:bold;color:#111">Детализация счета</div>
<div class="btn" style="left:1283px;top:533px;width:105px;background:#4575b0;color:#fff;font-size:13px">Выбор колонок</div>
<div class="a" style="left:283px;top:565px;width:13px;height:13px;background:#fff;border:1px solid #d0d0d0"></div>
<div class="t" style="left:300.2px;top:565.4px;font-size:12.9px;color:#444">Показать отпуски</div>

<!-- grid 2 -->
<div class="a" style="left:281px;top:582px;width:1109px;height:120px;background:#f5f5f5;border:1px solid #d3d3e3"></div>
<div class="a" style="left:282.5px;top:610.5px;width:1106px;height:44px;background:#fff"></div>
<div class="gl" style="left:282.5px;top:610px;width:1106px;height:1px"></div>
<div class="gl" style="left:282.5px;top:632px;width:1106px;height:1px"></div>
<div class="gl" style="left:282.5px;top:654px;width:1106px;height:1px"></div>
<div class="gl" style="left:323px;top:583px;width:1px;height:118px"></div>
<div class="gl" style="left:523px;top:583px;width:1px;height:118px"></div>
<div class="gl" style="left:623px;top:583px;width:1px;height:118px"></div>
<div class="gl" style="left:773px;top:583px;width:1px;height:118px"></div>
<div class="gl" style="left:873px;top:583px;width:1px;height:118px"></div>
<div class="gl" style="left:1023px;top:583px;width:1px;height:118px"></div>
<div class="gl" style="left:1143px;top:583px;width:1px;height:118px"></div>

<div class="cell hd" style="left:328.5px;top:590.1px">Назначение</div>
<div class="cell hd" style="left:528.2px;top:590.1px">Кол-во</div>
<div class="cell hd" style="left:628.4px;top:590.1px">Цена за ед.</div>
<div class="cell hd" style="left:778px;top:590.1px">Скидка</div>
<div class="cell hd" style="left:878.6px;top:590.1px">Цена</div>
<div class="cell hd" style="left:1027.6px;top:590.1px">Дата</div>

<svg class="a" style="left:292px;top:617px" width="22" height="10" viewBox="0 0 22 10"><rect x="0.9" y="1" width="3.9" height="8" fill="#0cb81e"/><rect x="0.9" y="1" width="3.9" height="1" fill="#0a7a14"/><g fill="#dcdcdc"><rect x="6" y="1" width="3.7" height="8"/><rect x="11" y="1" width="3.7" height="8"/><rect x="16" y="1" width="3.7" height="8"/></g><g fill="#c4c4c4"><rect x="6" y="1" width="3.7" height="1"/><rect x="11" y="1" width="3.7" height="1"/><rect x="16" y="1" width="3.7" height="1"/></g></svg>
<svg class="a" style="left:292px;top:639px" width="22" height="10" viewBox="0 0 22 10"><rect x="0.9" y="1" width="3.9" height="8" fill="#0cb81e"/><rect x="0.9" y="1" width="3.9" height="1" fill="#0a7a14"/><g fill="#dcdcdc"><rect x="6" y="1" width="3.7" height="8"/><rect x="11" y="1" width="3.7" height="8"/><rect x="16" y="1" width="3.7" height="8"/></g><g fill="#c4c4c4"><rect x="6" y="1" width="3.7" height="1"/><rect x="11" y="1" width="3.7" height="1"/><rect x="16" y="1" width="3.7" height="1"/></g></svg>

<div class="cell" style="left:328.5px;top:616.3px;font-size:12.6px">Массаж - 10 минут</div>
<div class="cell" style="left:524px;width:96px;text-align:right;top:616.2px">4</div>
<div class="cell" style="left:624px;width:146px;text-align:right;top:616.2px">900,00 <span class="r">Р</span></div>
<div class="cell" style="left:778px;top:616.2px">0%</div>
<div class="cell" style="left:874px;width:146px;text-align:right;top:616.2px">3 600,00 <span class="r">Р</span></div>
<div class="cell" style="left:1027.6px;top:616.2px">18.02.2022</div>

<div class="cell" style="left:328.5px;top:638.3px;font-size:12.6px">Массаж - 40 минут</div>
<div class="cell" style="left:524px;width:96px;text-align:right;top:638.2px">10</div>
<div class="cell" style="left:624px;width:146px;text-align:right;top:638.2px">2 400,00 <span class="r">Р</span></div>
<div class="cell" style="left:778px;top:638.2px">0%</div>
<div class="cell" style="left:874px;width:146px;text-align:right;top:638.2px">24 000,00 <span class="r">Р</span></div>
<div class="cell" style="left:1027.6px;top:638.2px">18.02.2022</div>

<div class="cell hd" style="left:874px;width:142.6px;text-align:right;top:670.1px">Итого:27 600,00 <span class="r">Р</span></div>


<!-- Status bar -->

<div class="a" style="left:0;top:715px;width:1416px;height:4px;background:#f6f6f6"></div>
<div class="a stripes" style="left:0;top:719px;width:1416px;height:25px"></div>
<div class="a" style="left:0;top:719px;width:1416px;height:4.5px;background:rgba(20,24,28,0.35)"></div>
<svg class="a" style="left:0;top:728px" width="8" height="14" viewBox="0 0 8 14"><path d="M0.5 5 q0-4.5 3.5-4.5 q3.5 0 3.5 4.5z" fill="#8a7a70"/><ellipse cx="4" cy="5" rx="2.6" ry="3" fill="#e6b8a8"/><path d="M0 14 v-3.5 q0-3 4-3.5 q4 0.5 4 3.5 v3.5z" fill="#f0f0f0"/><path d="M3.5 8 l0.5 3 l0.5-3z" fill="#6aa0d0"/></svg>
<div class="t" style="left:11px;top:727.6px;font-size:13.5px;letter-spacing:-0.2px;color:#f4f4f4">admin [Админов Админ Админович]</div>
<div class="t" style="left:1228px;top:729px;font-size:12.6px;color:#2b3034">345 ms</div>
<div class="t" style="left:1281px;top:729px;font-size:12.3px;font-weight:normal;color:#f4f4f4">Версия: 2.31.1779 x86</div>

<div class="a" style="left:1416px;top:0;width:1px;height:744px;background:#152b58"></div>
</body></html>
